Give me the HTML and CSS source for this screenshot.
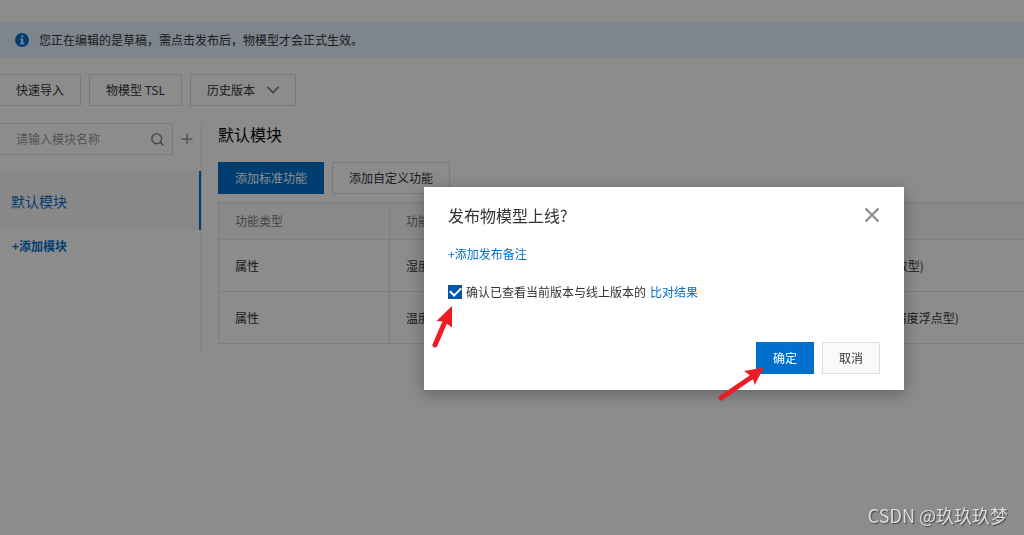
FILE: index.html
```html
<!DOCTYPE html>
<html lang="zh-CN">
<head>
<meta charset="utf-8">
<title>物模型编辑</title>
<link rel="stylesheet" href="styles.css">
</head>
<body>
<div class="page">
  <div class="notice">
    <svg class="notice-icon" viewBox="0 0 14 14" width="14" height="14" aria-hidden="true">
      <circle cx="7" cy="7" r="7" fill="#0070cc"/>
      <path d="M6 2.4h2.2v1.8H6zM5.2 5.4h3v4.7h1v1.2H5v-1.2h1.1V6.6h-.9z" fill="#e6f2ff"/>
    </svg>
    <span>您正在编辑的是草稿，需点击发布后，物模型才会正式生效。</span>
  </div>
  <div class="toolbar">
    <button class="btn btn-first" type="button">快速导入</button>
    <button class="btn" type="button">物模型 TSL</button>
    <button class="btn btn-menu" type="button">历史版本
      <svg viewBox="0 0 12 8" width="12" height="8" aria-hidden="true"><path d="M.5.8 6 6.600 11.500.8" fill="none" stroke="#808080" stroke-width="1.8"/></svg>
    </button>
  </div>
  <div class="content">
    <aside class="sidebar">
      <div class="search-row">
        <label class="search">
          <input type="text" placeholder="请输入模块名称" aria-label="请输入模块名称">
          <svg viewBox="0 0 14 14" width="13" height="13" aria-hidden="true"><circle cx="6.2" cy="6.2" r="5.300" fill="none" stroke="#808080" stroke-width="1.5"/><path d="m10 10 3.300 3.300" stroke="#808080" stroke-width="1.600"/></svg>
        </label>
        <button class="plus" type="button" aria-label="新增">
          <svg viewBox="0 0 12 12" width="12" height="12"><path d="M6 .5v11M.5 6h11" stroke="#999" stroke-width="1.4"/></svg>
        </button>
      </div>
      <a class="module" href="#">默认模块</a>
      <a class="add-module" href="#">+添加模块</a>
    </aside>
    <main class="main">
      <h1 class="title">默认模块</h1>
      <div class="actions">
        <button class="btn btn-primary" type="button">添加标准功能</button>
        <button class="btn" type="button">添加自定义功能</button>
      </div>
      <table class="features">
        <thead>
          <tr><th class="col-type">功能类型</th><th class="col-name">功能</th><th></th></tr>
        </thead>
        <tbody>
          <tr><td>属性</td><td>湿度</td><td>int32 (长整数型)</td></tr>
          <tr><td>属性</td><td>温度</td><td>double (双精度浮点型)</td></tr>
        </tbody>
      </table>
    </main>
  </div>
</div>
<div class="mask"></div>
<section class="dialog" role="dialog" aria-labelledby="dialog-title">
  <header class="dialog-head">
    <h2 id="dialog-title">发布物模型上线?</h2>
    <button class="close" type="button" aria-label="关闭">
      <svg viewBox="0 0 16 16" width="16" height="16"><path d="m1.500 1.500 13 13m0-13-13 13" stroke="#888" stroke-width="2"/></svg>
    </button>
  </header>
  <a class="note-link" href="#">+添加发布备注</a>
  <div class="confirm">
    <input id="checked" type="checkbox" checked>
    <label for="checked">确认已查看当前版本与线上版本的</label>
    <a class="compare" href="#">比对结果</a>
  </div>
  <footer class="dialog-foot">
    <button class="btn btn-primary" type="button">确定</button>
    <button class="btn btn-plain" type="button">取消</button>
  </footer>
</section>
<svg class="arrow arrow-check" viewBox="0 0 24 46" width="24" height="46" aria-hidden="true">
  <path d="M4 40 13 19" stroke="#ed1c24" stroke-width="5" stroke-linecap="round"/>
  <path d="M21 1 5.500 16l5.500.5 6 3 4 3z" fill="#ed1c24"/>
</svg>
<svg class="arrow arrow-ok" viewBox="0 0 48 36" width="48" height="36" aria-hidden="true">
  <path d="M4 32 34 11.500" stroke="#ed1c24" stroke-width="5" stroke-linecap="round"/>
  <path d="M47 1.500 27 5l5 3.500 4.500 6L37.500 19z" fill="#ed1c24"/>
</svg>
<div class="watermark">CSDN @玖玖玖梦</div>
</body>
</html>
```

FILE: styles.css
```css
* {
  box-sizing: border-box;
}

body {
  margin: 0;
  min-height: 100vh;
  overflow: hidden;
  background: #fff;
  color: #333;
  font: 12px/18px "Noto Sans CJK SC", sans-serif;
}

button,
input {
  margin: 0;
  font: inherit;
}

a {
  color: #0070cc;
  text-decoration: none;
}

.page {
  padding-top: 22px;
}

.notice {
  display: flex;
  align-items: center;
  gap: 10px;
  height: 36px;
  padding: 0 15px;
  background: #e5f2ff;
}

.toolbar {
  display: flex;
  gap: 8px;
  padding: 16px 0;
}

.btn {
  height: 32px;
  padding: 0 16px;
  border: 1px solid #dedede;
  border-radius: 0;
  background: transparent;
  color: #333;
  white-space: nowrap;
}

.btn-first {
  border-left: 0;
}

.btn-menu {
  display: flex;
  align-items: center;
  gap: 12px;
}

.btn-primary {
  border-color: #0070cc;
  background: #0070cc;
  color: #fff;
}

.btn-plain {
  background: #fafafa;
}

.content {
  display: flex;
}

.sidebar {
  flex: 0 0 202px;
  height: 230px;
  border-right: 1px solid #e5e5e5;
}

.search-row {
  display: flex;
  align-items: center;
  padding-top: 1px;
}

.search {
  display: flex;
  align-items: center;
  width: 173px;
  height: 32px;
  padding: 0 8px 0 16px;
  border: 1px solid #dedede;
  border-left: 0;
}

.search input {
  flex: 1;
  min-width: 0;
  padding: 0;
  border: 0;
  outline: 0;
  background: transparent;
}

.search input::placeholder {
  color: #999;
}

.plus,
.close {
  display: flex;
  padding: 0;
  border: 0;
  background: none;
}

.plus {
  margin-left: 8px;
}

.module {
  display: flex;
  align-items: center;
  height: 59px;
  margin-top: 16px;
  padding-left: 11px;
  border-right: 2px solid #0070cc;
  background: #f7f7f7;
  font-size: 14px;
}

.add-module {
  display: block;
  padding: 7px 12px;
  font-weight: 700;
}

.main {
  flex: 1;
  min-width: 0;
  padding-left: 16px;
}

.title {
  margin: 0;
  color: #000;
  font-size: 16px;
  font-weight: 400;
  line-height: 24px;
}

.actions {
  display: flex;
  gap: 8px;
  padding: 16px 0 8px;
}

.features {
  width: 100%;
  border: 1px solid #e5e5e5;
  border-right: 0;
  border-collapse: collapse;
  table-layout: fixed;
}

.features th,
.features td {
  height: 52px;
  padding: 0 16px;
  border-bottom: 1px solid #e5e5e5;
  text-align: left;
}

.features th {
  height: 37px;
  background: #fafafa;
  color: #808080;
  font-weight: 400;
}

.features th:first-child,
.features td:first-child {
  border-right: 1px solid #e5e5e5;
}

.col-type {
  width: 171px;
}

.col-name {
  width: 431px;
}

.mask {
  position: fixed;
  inset: 0;
  background: rgba(0, 0, 0, 0.45);
}

.dialog {
  position: absolute;
  top: 187px;
  left: 424px;
  width: 480px;
  padding: 16px 24px;
  background: #fff;
  box-shadow: 0 4px 16px rgba(0, 0, 0, 0.3);
}

.dialog-head {
  display: flex;
  align-items: center;
  justify-content: space-between;
}

.dialog-head h2 {
  margin: 0;
  font-size: 16px;
  font-weight: 400;
  line-height: 24px;
}

.note-link {
  display: block;
  margin-top: 18px;
}

.confirm {
  display: flex;
  align-items: center;
  gap: 4px;
  margin-top: 20px;
}

.confirm input {
  display: grid;
  place-items: center;
  width: 14px;
  height: 14px;
  appearance: none;
  background: #0058a8;
}

.confirm input::before {
  content: "";
  width: 9px;
  height: 5px;
  margin-bottom: 3px;
  border: solid #fff;
  border-width: 0 0 2px 2px;
  transform: rotate(-45deg);
}

.dialog-foot {
  display: flex;
  justify-content: flex-end;
  gap: 8px;
  margin-top: 41px;
}

.arrow {
  position: absolute;
  fill: none;
}

.arrow-check {
  top: 305px;
  left: 431px;
}

.arrow-ok {
  top: 366px;
  left: 717px;
}

.watermark {
  position: fixed;
  right: 16px;
  bottom: 8px;
  color: #ddd;
  font-size: 18px;
  line-height: 24px;
  text-shadow: 1px 1px 1px #444;
}
```
